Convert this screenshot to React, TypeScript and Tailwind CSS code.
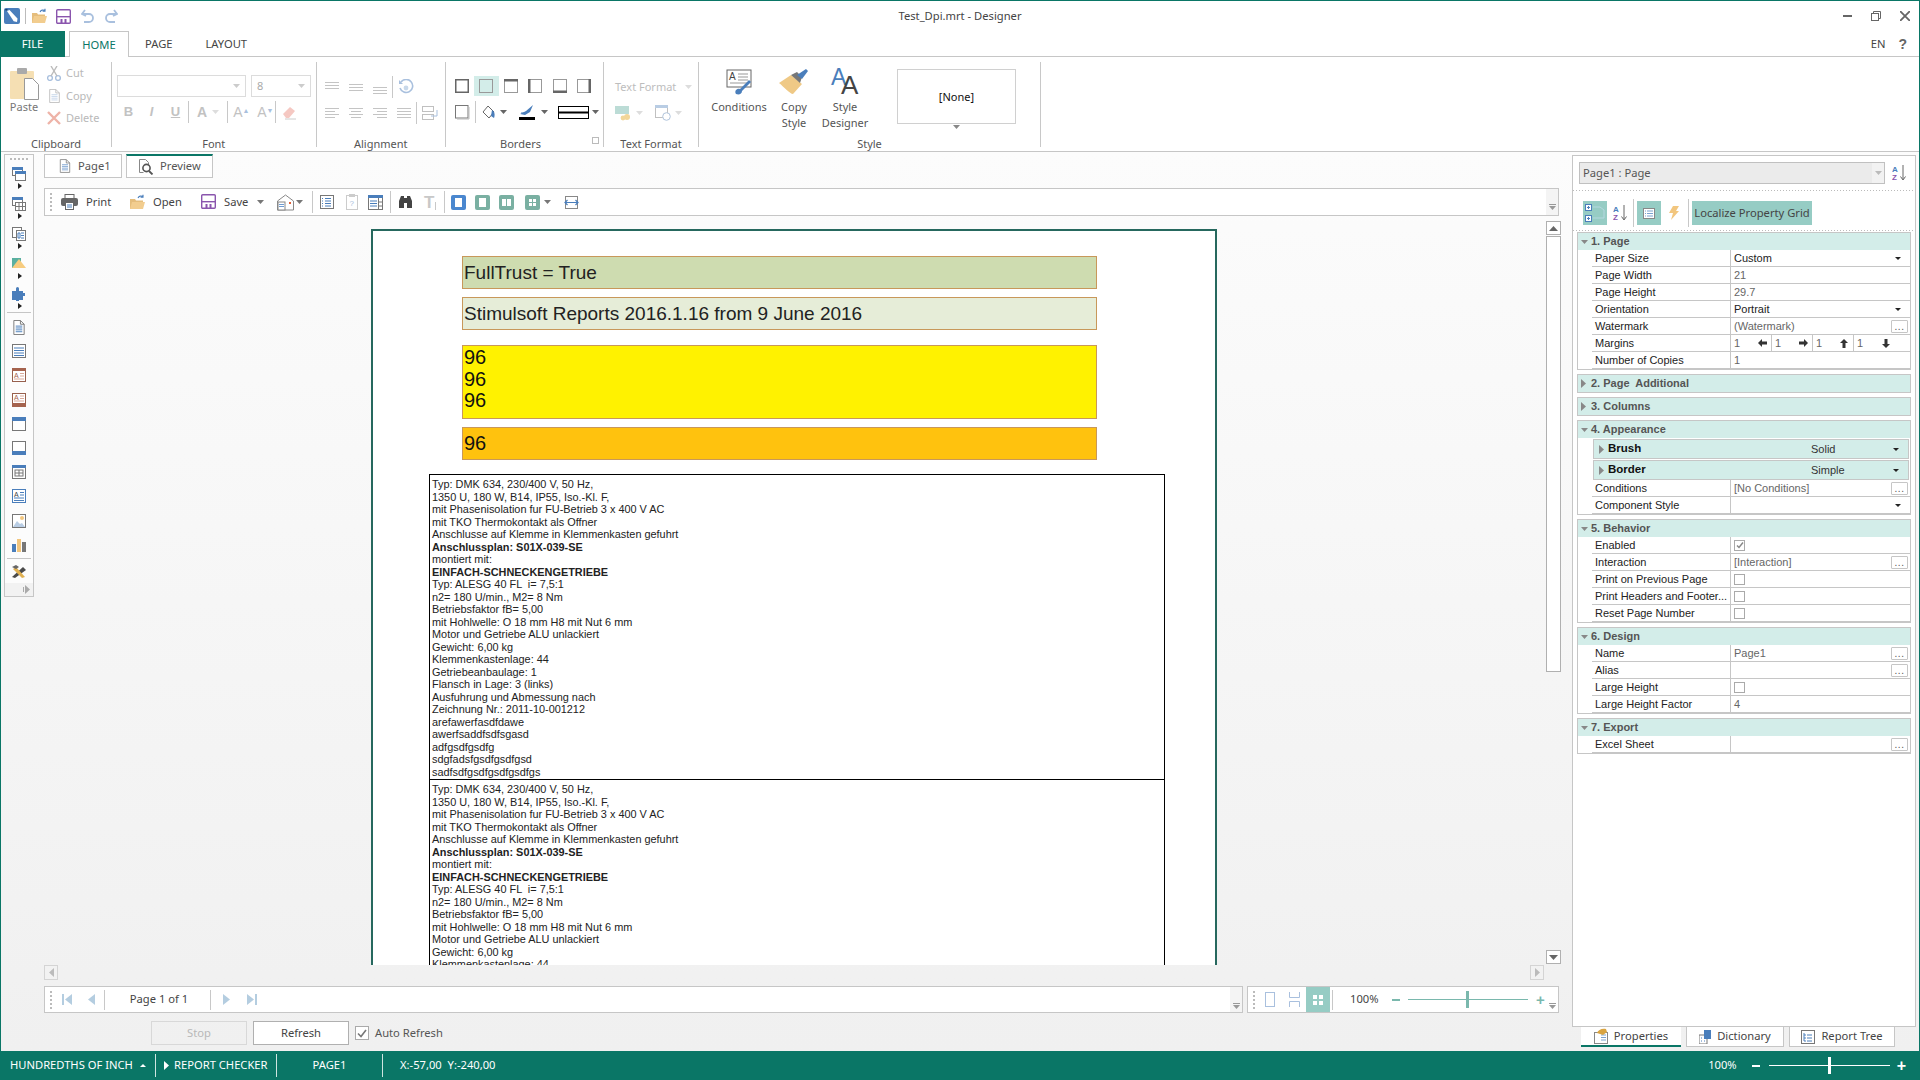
import type { ReactNode } from "react";

const reportLines: Array<[string, boolean?]> = [
  ["Typ: DMK 634, 230/400 V, 50 Hz,"],
  ["1350 U, 180 W, B14, IP55, Iso.-Kl. F,"],
  ["mit Phasenisolation fur FU-Betrieb 3 x 400 V AC"],
  ["mit TKO Thermokontakt als Offner"],
  ["Anschlusse auf Klemme in Klemmenkasten gefuhrt"],
  ["Anschlussplan: S01X-039-SE", true],
  ["montiert mit:"],
  ["EINFACH-SCHNECKENGETRIEBE", true],
  ["Typ: ALESG 40 FL  i= 7,5:1"],
  ["n2= 180 U/min., M2= 8 Nm"],
  ["Betriebsfaktor fB= 5,00"],
  ["mit Hohlwelle: O 18 mm H8 mit Nut 6 mm"],
  ["Motor und Getriebe ALU unlackiert"],
  ["Gewicht: 6,00 kg"],
  ["Klemmenkastenlage: 44"],
  ["Getriebeanbaulage: 1"],
  ["Flansch in Lage: 3 (links)"],
  ["Ausfuhrung und Abmessung nach"],
  ["Zeichnung Nr.: 2011-10-001212"],
  ["arefawerfasdfdawe"],
  ["awerfsaddfsdfsgasd"],
  ["adfgsdfgsdfg"],
  ["sdgfadsfgsdfgsdfgsd"],
  ["sadfsdfgsdfgsdfgsdfgs"],
];

function Svg({ w = 16, h = 16, vb, children }: { w?: number; h?: number; vb?: string; children: ReactNode }) {
  return (
    <svg width={w} height={h} viewBox={vb ?? `0 0 ${w} ${h}`} className="block shrink-0">
      {children}
    </svg>
  );
}

function Caret({ color = "#777" }: { color?: string }) {
  return (
    <Svg w={7} h={4}>
      <path d="M0 0h7L3.5 4z" fill={color} />
    </Svg>
  );
}

function RightCaret({ color = "#888" }: { color?: string }) {
  return (
    <Svg w={5} h={9}>
      <path d="M0 0l5 4.5L0 9z" fill={color} />
    </Svg>
  );
}

function DownCaret({ color = "#888" }: { color?: string }) {
  return (
    <Svg w={9} h={5}>
      <path d="M0 0h9L4.5 5z" fill={color} />
    </Svg>
  );
}

function VSep({ h = 22, color = "bg-[#c8c8c8]", m = "mx-[6px]" }: { h?: number; color?: string; m?: string }) {
  return <div className={`w-px shrink-0 ${color} ${m}`} style={{ height: h }} />;
}

function Folder() {
  return (
    <Svg w={17} h={17}>
      <path d="M1 5h5l1 1.5h7V15H1z" fill="#e5bd7c" />
      <path d="M3 8h13l-2 7H1z" fill="#f2cd8f" />
      <path d="M9 4c1-2 3-2.5 5-1.5M14 .8v2.4h-2.4" stroke="#4a7ebb" strokeWidth="1.1" fill="none" />
    </Svg>
  );
}

function Floppy({ s = 15 }: { s?: number }) {
  return (
    <Svg w={s} h={s} vb="0 0 15 15">
      <rect x="0.7" y="0.7" width="13.6" height="13.6" rx="1" fill="#fff" stroke="#8a55ad" strokeWidth="1.4" />
      <rect x="1" y="7" width="13" height="1.4" fill="#8a55ad" />
      <rect x="4.5" y="10" width="2" height="4" fill="#8a55ad" />
      <rect x="8.5" y="10" width="2" height="4" fill="#8a55ad" />
    </Svg>
  );
}

function Logo() {
  return (
    <Svg w={16} h={16}>
      <rect width="16" height="16" rx="2" fill="#4a7ebb" />
      <path d="M3 3l2.5-1 8 8.5-.5 3.5-3.3-.8z" fill="#fff" />
      <path d="M1 1l3 0-2 2z" fill="#1f3f66" />
    </Svg>
  );
}

function Undo({ flip }: { flip?: boolean }) {
  return (
    <Svg w={14} h={15}>
      <path
        d={flip ? "M10 1l3 4-4 2M12.5 5H6a4 4 0 000 8h5" : "M4 1L1 5l4 2M1.5 5H8a4 4 0 010 8H3"}
        fill="none"
        stroke="#a9c0de"
        strokeWidth="1.8"
      />
    </Svg>
  );
}

function DocLines({ w = 14, h = 16, color = "#777", line = "#6f9bd0" }: { w?: number; h?: number; color?: string; line?: string }) {
  return (
    <Svg w={w} h={h} vb="0 0 14 16">
      <path d="M1.5.5h7l4 4v11h-11z" fill="#fff" stroke={color} />
      <path d="M8.5.5v4h4" fill="none" stroke={color} />
      <path d="M3.5 6.5h7M3.5 8.5h7M3.5 10.5h7M3.5 12.5h7" stroke={line} />
    </Svg>
  );
}

function BandIcon({ top, bottom }: { top?: string; bottom?: string }) {
  return (
    <Svg w={14} h={14}>
      <rect x="0.5" y="0.5" width="13" height="13" fill="#fff" stroke="#777" />
      {top && <rect width="14" height="4" fill={top} />}
      {bottom && <rect y="10" width="14" height="4" fill={bottom} />}
    </Svg>
  );
}

function ListIcon({ color = "#4a7ebb" }: { color?: string }) {
  return (
    <Svg w={14} h={14}>
      <rect x="0.5" y="0.5" width="13" height="13" fill="#fff" stroke="#777" />
      <path d="M2 4h10M2 6.5h10M2 9h10M2 11.5h10" stroke={color} />
    </Svg>
  );
}

function BorderBox({ side }: { side?: "all" | "top" | "left" | "bottom" | "right" | "none" }) {
  const dark = "#666";
  const light = "#999";
  return (
    <Svg w={14} h={14}>
      <rect x="0.5" y="0.5" width="13" height="13" fill="none" stroke={side === "all" ? dark : light} strokeWidth={side === "all" ? 2 : 1} />
      {side === "top" && <rect width="14" height="2.5" fill={dark} />}
      {side === "left" && <rect width="2.5" height="14" fill={dark} />}
      {side === "bottom" && <rect y="11.5" width="14" height="2.5" fill={dark} />}
      {side === "right" && <rect x="11.5" width="2.5" height="14" fill={dark} />}
    </Svg>
  );
}

function TextAlign({ kind }: { kind: "top" | "mid" | "bot" | "left" | "center" | "right" | "just" }) {
  const y = kind === "top" ? [1, 4, 7] : kind === "mid" ? [3, 6, 9] : kind === "bot" ? [6, 9, 12] : [1, 4, 7, 10];
  return (
    <Svg w={14} h={13}>
      {y.map((v, i) => {
        let x1 = 0;
        let x2 = 14;
        if (i % 2 === 1 && kind === "left") x2 = 10;
        if (i % 2 === 1 && kind === "right") x1 = 4;
        if (i % 2 === 1 && kind === "center") {
          x1 = 2;
          x2 = 12;
        }
        return <rect key={v} x={x1} y={v} width={x2 - x1} height="1" fill="#c4c4c4" />;
      })}
    </Svg>
  );
}

function Group({ w, label, labelPad, children, extra }: { w: string; label?: string; labelPad?: string; children?: ReactNode; extra?: ReactNode }) {
  return (
    <div className={`${w} relative flex h-[85px] shrink-0 flex-col border-r border-[#c8c8c8]`}>
      <div className="h-[74px] shrink-0">{children}</div>
      <div className={`h-[16px] shrink-0 text-center text-[11px] leading-[16px] text-[#555] ${labelPad ?? ""}`}>{label}</div>
      {extra}
    </div>
  );
}

function DisabledSmall({ icon, text }: { icon: ReactNode; text: string }) {
  return (
    <div className="flex h-[22.5px] items-center gap-[5px]">
      <div className="flex w-[14px] justify-center">{icon}</div>
      <span className="text-[11px] text-[#b9b9b9]">{text}</span>
    </div>
  );
}

function Ribbon() {
  return (
    <div className="flex h-[95px] shrink-0 border-b border-[#c6c6c6] bg-white pt-[5px]">
      <Group w="w-[111px]" label="Clipboard">
        <div className="flex">
          <div className="flex w-[46px] flex-col items-center pt-[6px]">
            <Svg w={29} h={33}>
              <rect x="0" y="3" width="24" height="28" rx="1" fill="#f5dfb3" />
              <rect x="7" y="0" width="10" height="6" rx="1" fill="#aaa" />
              <path d="M14.5 10.5h8l6 6v15h-14z" fill="#fff" stroke="#999" />
            </Svg>
            <span className="mt-[-2px] text-[11px] text-[#777]">Paste</span>
          </div>
          <div>
            <DisabledSmall
              text="Cut"
              icon={
                <Svg w={14} h={15}>
                  <circle cx="3" cy="12" r="2.4" fill="none" stroke="#a9c0de" strokeWidth="1.4" />
                  <circle cx="11" cy="12" r="2.4" fill="none" stroke="#a9c0de" strokeWidth="1.4" />
                  <path d="M4 10L10 0M10 10L4 0" stroke="#bbb" strokeWidth="1.4" />
                </Svg>
              }
            />
            <DisabledSmall text="Copy" icon={<DocLines w={13} h={14} color="#bbb" line="#c4d4e8" />} />
            <DisabledSmall
              text="Delete"
              icon={
                <Svg w={14} h={14}>
                  <path d="M1 1l12 12M13 1L1 13" stroke="#eeb3a8" strokeWidth="2.4" />
                </Svg>
              }
            />
          </div>
        </div>
      </Group>
      <Group w="w-[204.5px]" label="Font">
        <div className="pl-[5px] pt-[13px]">
          <div className="flex gap-[5px]">
            <div className="flex h-[22px] w-[129px] items-center justify-end border border-[#dcdcdc] pr-[5px]">
              <Caret color="#ccc" />
            </div>
            <div className="flex h-[22px] w-[60px] items-center justify-between border border-[#dcdcdc] px-[5px] text-[11px] text-[#aaa]">
              8
              <Caret color="#ccc" />
            </div>
          </div>
          <div className="mt-[4px] flex h-[22px] items-center font-['Liberation_Sans',sans-serif] text-[#c2c2c2]">
            <span className="w-[23px] text-center text-[13px] font-bold">B</span>
            <span className="w-[23px] text-center text-[13px] font-bold italic">I</span>
            <span className="w-[25px] text-center text-[13px] font-bold underline">U</span>
            <VSep m="mx-0" />
            <span className="ml-[8px] text-[14px] font-bold">A</span>
            <div className="ml-[5px]">
              <Caret color="#ddd" />
            </div>
            <VSep m="ml-[8px] mr-[5px]" />
            <span className="w-[24px] text-[14px]">
              A<sup className="text-[7px] text-[#a9c0de]">▲</sup>
            </span>
            <span className="w-[18px] text-[14px]">
              A<sup className="text-[7px] text-[#a9c0de]">▼</sup>
            </span>
            <VSep m="mx-0" />
            <div className="ml-[6px]">
              <Svg w={15} h={15}>
                <path d="M1 9l7-7 5 4-6 7H4z" fill="#f5c8c2" />
                <path d="M3 14h11" stroke="#ccc" />
              </Svg>
            </div>
          </div>
        </div>
      </Group>
      <Group w="w-[129.5px]" label="Alignment">
        <div className="pl-[8px] pt-[15px]">
          <div className="flex h-[20px] items-center gap-[10px]">
            <TextAlign kind="top" />
            <TextAlign kind="mid" />
            <TextAlign kind="bot" />
            <VSep m="-mx-[5px]" />
            <Svg w={18} h={16}>
              <path d="M3 3a6.5 6.5 0 11-1 6" fill="none" stroke="#a9c0de" strokeWidth="1.6" />
              <path d="M1 1v4h4" fill="#a9c0de" />
              <circle cx="8" cy="9" r="2.4" fill="#c8d8ea" />
            </Svg>
          </div>
          <div className="mt-[6px] flex h-[20px] items-center gap-[10px]">
            <TextAlign kind="left" />
            <TextAlign kind="center" />
            <TextAlign kind="right" />
            <TextAlign kind="just" />
            <VSep m="-mx-[5px]" />
            <Svg w={16} h={15}>
              <rect x="0.5" y="0.5" width="11" height="5" fill="none" stroke="#c0c0c0" />
              <rect x="0.5" y="8.5" width="11" height="5" fill="none" stroke="#c0c0c0" />
              <path d="M15 4v6H9" stroke="#a9c0de" fill="none" />
            </Svg>
          </div>
        </div>
      </Group>
      <Group
        w="w-[158px]"
        label="Borders"
        labelPad="pr-[8px]"
        extra={<div className="absolute bottom-[3px] right-[4px] h-[7px] w-[7px] border border-[#bbb] bg-white" />}
      >
        <div className="pl-[3.5px] pt-[14px]">
          <div className="flex h-[20px] items-center">
            <div className="flex w-[24.5px] justify-center">
              <BorderBox side="all" />
            </div>
            <div className="flex h-[20px] w-[24.5px] items-center justify-center bg-[#d3ede9]">
              <BorderBox side="none" />
            </div>
            <div className="flex w-[24.5px] justify-center">
              <BorderBox side="top" />
            </div>
            <div className="flex w-[24.5px] justify-center">
              <BorderBox side="left" />
            </div>
            <div className="flex w-[24.5px] justify-center">
              <BorderBox side="bottom" />
            </div>
            <div className="flex w-[24.5px] justify-center">
              <BorderBox side="right" />
            </div>
          </div>
          <div className="mt-[6px] flex h-[20px] items-center pl-[5px]">
            <Svg w={15} h={15}>
              <rect x="0.5" y="0.5" width="12.5" height="12.5" fill="#fff" stroke="#777" />
              <path d="M14 2v12H2" stroke="#bbb" fill="none" />
            </Svg>
            <VSep m="mx-[5px]" />
            <Svg w={15} h={15}>
              <path d="M7 1l6 6-5 6-6-6z" fill="#fff" stroke="#666" />
              <path d="M11 5c3 2 3 5 2 8l-3-2z" fill="#4a7ebb" />
            </Svg>
            <div className="ml-[4px]">
              <Caret color="#666" />
            </div>
            <div className="ml-[12px]">
              <Svg w={17} h={16}>
                <path d="M1 10l6-3 7-6-3 7-5 3z" fill="#4a7ebb" />
                <path d="M2 9h6" stroke="#4a7ebb" />
                <rect x="0" y="13" width="16" height="3" fill="#000" />
              </Svg>
            </div>
            <div className="ml-[5px]">
              <Caret color="#666" />
            </div>
            <div className="ml-[10px]">
              <Svg w={31} h={13}>
                <rect x="0.5" y="0.5" width="30" height="12" fill="#fff" stroke="#000" />
                <rect x="0" y="5.5" width="31" height="2" fill="#000" />
              </Svg>
            </div>
            <div className="ml-[3px]">
              <Caret color="#666" />
            </div>
          </div>
        </div>
      </Group>
      <Group w="w-[95px]" label="Text Format">
        <div className="pl-[11px] pt-[15px]">
          <div className="flex h-[20px] items-center gap-[9px] text-[11px] text-[#bdbdbd]">
            Text Format
            <Caret color="#ddd" />
          </div>
          <div className="mt-[6px] flex h-[20px] items-center">
            <Svg w={17} h={16}>
              <rect x="0" y="1" width="14" height="8" fill="#bcdcd6" />
              <circle cx="12" cy="12" r="3" fill="#f2d699" />
              <circle cx="8" cy="13" r="2.4" fill="#f2d699" />
            </Svg>
            <div className="ml-[4px]">
              <Caret color="#ddd" />
            </div>
            <div className="ml-[12px]">
              <Svg w={16} h={16}>
                <rect x="0.5" y="0.5" width="12" height="12" fill="#fff" stroke="#c0c0c0" />
                <rect width="13" height="3" fill="#b9cde4" />
                <circle cx="11.5" cy="11.5" r="3.8" fill="#fff" stroke="#b0c4dc" />
              </Svg>
            </div>
            <div className="ml-[4px]">
              <Caret color="#ddd" />
            </div>
          </div>
        </div>
      </Group>
      <Group w="w-[342px]" label="Style">
        <div className="flex pt-[7px] text-center text-[11px] leading-[16px] text-[#555]">
          <div className="flex w-[80px] flex-col items-center">
            <Svg w={26} h={26}>
              <rect x="1" y="1" width="24" height="17" fill="#fff" stroke="#666" />
              <path d="M12 5h10M12 8h10M12 11h10M4 14h18" stroke="#999" />
              <text x="3" y="11" fontSize="10" fontFamily="Liberation Sans" fill="#444">
                A
              </text>
              <path d="M10 25c-2-3 1-6 4-5l9-9 2 2-9 9c0 3-3 4-6 3z" fill="#4a7ebb" />
            </Svg>
            <div className="mt-[4px]">Conditions</div>
          </div>
          <div className="flex w-[30px] flex-col items-center">
            <Svg w={30} h={26}>
              <path d="M0 14l12-8 11 9-9 10c-3 0-9-7-14-11z" fill="#efc986" />
              <path d="M12 6l6-3 5 5-2 6z" fill="#777" />
              <path d="M18 6l9-6 2 2-6 8z" fill="#4a7ebb" />
            </Svg>
            <div className="mt-[4px]">
              Copy
              <br />
              Style
            </div>
          </div>
          <div className="ml-[6px] flex w-[60px] flex-col items-center">
            <div className="relative h-[26px] w-[28px] font-['Liberation_Sans',sans-serif] leading-none">
              <span className="absolute left-0 top-[-3px] text-[23px] text-[#4a7ebb]">A</span>
              <span className="absolute left-[10px] top-[3px] text-[26px] text-[#444]">A</span>
            </div>
            <div className="mt-[4px]">
              Style
              <br />
              Designer
            </div>
          </div>
          <div className="ml-[22px]">
            <div className="flex h-[55px] w-[119px] items-center justify-center border border-[#d0d0d0] text-[11px] text-[#111]">
              [None]
            </div>
            <div className="mt-[1px] flex justify-center">
              <Caret color="#888" />
            </div>
          </div>
        </div>
      </Group>
    </div>
  );
}

function LeftToolbar() {
  const stacked = (a: ReactNode) => (
    <div className="flex h-[30px] flex-col items-center pt-[3px]">
      {a}
      <div className="ml-px mt-[2px]">
        <Svg w={4} h={6}>
          <path d="M0 0l4 3-4 3z" fill="#222" />
        </Svg>
      </div>
    </div>
  );
  const single = (a: ReactNode) => <div className="flex h-[24.2px] items-center justify-center">{a}</div>;
  return (
    <div className="ml-[3px] mt-[2px] flex h-[443px] w-[30px] shrink-0 flex-col border border-[#c6c6c6] bg-[#fcfcfc]">
      <div className="mt-[3px] flex justify-center">
        <div className="h-[2px] w-[18px] bg-[repeating-linear-gradient(90deg,#bbb_0,#bbb_2px,transparent_2px,transparent_4px)]" />
      </div>
      <div className="mt-[4px] flex flex-col">
        {stacked(
          <Svg w={14} h={14}>
            <rect x="0.5" y="0.5" width="10" height="8" fill="#fff" stroke="#777" />
            <rect width="11" height="3" fill="#4a7ebb" />
            <rect x="3.5" y="4.5" width="10" height="9" fill="#fff" stroke="#777" />
            <rect x="3" y="4" width="11" height="3" fill="#4a7ebb" />
          </Svg>
        )}
        {stacked(
          <Svg w={14} h={14}>
            <rect x="0.5" y="0.5" width="10" height="8" fill="#fff" stroke="#777" />
            <rect width="11" height="3" fill="#4a7ebb" />
            <rect x="3.5" y="5.5" width="10" height="8" fill="#fff" stroke="#777" />
            <path d="M3.5 9.5h10M7 5.5v8M10.5 5.5v8" stroke="#777" />
          </Svg>
        )}
        {stacked(
          <Svg w={14} h={14}>
            <rect x="0.5" y="0.5" width="9" height="10" fill="#fff" stroke="#777" />
            <rect x="4.5" y="3.5" width="9" height="10" fill="#fff" stroke="#777" />
            <path d="M6 6h2v5H6zM9 6h3M9 8.5h3M9 11h3" stroke="#4a7ebb" fill="none" />
          </Svg>
        )}
        {stacked(
          <Svg w={14} h={14}>
            <rect y="1" width="9" height="10" fill="#5ab0a0" />
            <path d="M0 11l7-9 7 9z" fill="#f7cc7f" />
          </Svg>
        )}
        {stacked(
          <Svg w={14} h={14}>
            <path d="M0 4h4V1.5a1.5 1.5 0 013 0V4h4v2h2v3h-2v4H7v1H4v-1H0z" fill="#4a7ebb" />
          </Svg>
        )}
      </div>
      <div className="mx-[2px] mt-[-2px] h-px bg-[#c6c6c6]" />
      <div className="mt-[2px] flex flex-col">
        {single(<DocLines w={14} h={15} color="#777" line="#4a7ebb" />)}
        {single(<ListIcon />)}
        {single(
          <Svg w={14} h={14}>
            <rect x="0.5" y="0.5" width="13" height="13" fill="#fff" stroke="#97604d" />
            <rect width="14" height="3" fill="#a5634e" />
            <path d="M8 5.5h4M8 8h4M2 11h10" stroke="#d9a999" />
            <text x="2" y="10" fontSize="7" fontFamily="Liberation Sans" fill="#a5634e">
              A
            </text>
          </Svg>
        )}
        {single(
          <Svg w={14} h={14}>
            <rect x="0.5" y="0.5" width="13" height="13" fill="#fff" stroke="#97604d" />
            <rect y="10" width="14" height="4" fill="#a5634e" />
            <path d="M8 3h4M8 5.5h4M2 8h10" stroke="#d9a999" />
            <text x="2" y="7" fontSize="7" fontFamily="Liberation Sans" fill="#a5634e">
              A
            </text>
          </Svg>
        )}
        {single(<BandIcon top="#4a7ebb" />)}
        {single(<BandIcon bottom="#4a7ebb" />)}
        {single(
          <Svg w={14} h={14}>
            <rect x="0.5" y="0.5" width="13" height="13" fill="#fff" stroke="#777" />
            <rect width="14" height="3" fill="#4a7ebb" />
            <rect x="3" y="5" width="8" height="6" fill="none" stroke="#777" />
            <path d="M3 8h8M7 5v6" stroke="#777" />
          </Svg>
        )}
        {single(
          <Svg w={14} h={14}>
            <rect x="0.5" y="0.5" width="13" height="13" fill="#fff" stroke="#4a7ebb" />
            <path d="M8 3.5h4M8 6h4M2 9h10M2 11.5h10" stroke="#4a7ebb" />
            <text x="2" y="7.5" fontSize="7" fontFamily="Liberation Sans" fill="#444">
              A
            </text>
          </Svg>
        )}
        {single(
          <Svg w={14} h={14}>
            <rect x="0.5" y="0.5" width="13" height="13" fill="#fff" stroke="#777" />
            <path d="M1 13l4-6 3 3 2-1 3 4z" fill="#b9cde4" />
            <circle cx="10" cy="4" r="2" fill="#f2c67e" />
          </Svg>
        )}
        {single(
          <Svg w={14} h={14}>
            <rect y="6" width="4" height="8" fill="#4a7ebb" />
            <rect x="5" y="1" width="4" height="13" fill="#f2c67e" />
            <rect x="10" y="4" width="4" height="10" fill="#777" />
          </Svg>
        )}
      </div>
      <div className="mx-[2px] mt-[1px] h-px bg-[#c6c6c6]" />
      <div className="flex h-[24px] items-center justify-center">
        <Svg w={16} h={14}>
          <path d="M1 13L12 3l3 3L4 14z" fill="#4a4a4a" />
          <path d="M14 13L5 3 2 5l9 9z" fill="#e0b050" />
          <path d="M1 3l4-2 3 2-3 2z" fill="#666" />
        </Svg>
      </div>
      <div className="flex flex-1 items-center justify-end gap-px bg-[#f2f2f2] pr-[3px]">
        <div className="h-[5px] w-px bg-[#aaa]" />
        <RightCaret color="#aaa" />
      </div>
    </div>
  );
}

function ListIconBlue() {
  return (
    <Svg w={14} h={14}>
      <rect x="0.5" y="0.5" width="13" height="13" fill="#fff" stroke="#777" />
      <path d="M5 3.5h6M5 6h6M5 8.5h6M5 11h6" stroke="#4a7ebb" />
      <path d="M2.5 3v1M2.5 5.5v1M2.5 8v1M2.5 10.5v1" stroke="#4a7ebb" />
    </Svg>
  );
}

function FilledPage({ bg, kind }: { bg: string; kind?: "one" | "two" | "four" }) {
  return (
    <div className={`${bg} flex h-[15px] w-[15px] items-center justify-center rounded-[2px]`}>
      <Svg w={9} h={9}>
        {kind === "four" ? (
          <path d="M1 1h3v3H1zM5 1h3v3H5zM1 5h3v3H1zM5 5h3v3H5z" fill="#fff" />
        ) : kind === "two" ? (
          <path d="M0 1h4v7H0zM5 1h4v7H5z" fill="#fff" />
        ) : (
          <path d="M1 0h7v9H1z" fill="#fff" />
        )}
      </Svg>
    </div>
  );
}

function Grip() {
  return (
    <div className="ml-[5px] h-[18px] w-[2px] shrink-0 bg-[repeating-linear-gradient(180deg,#bbb_0,#bbb_2px,transparent_2px,transparent_4px)]" />
  );
}

function PreviewToolbar() {
  return (
    <div className="flex h-[28px] w-[1515px] shrink-0 items-center border border-[#c6c6c6] bg-white text-[11.2px] text-[#444]">
      <Grip />
      <div className="ml-[9px] flex w-[50px] items-center gap-[8px]">
        <Svg w={17} h={16}>
          <rect x="4" y="0.5" width="9" height="5" fill="#fff" stroke="#666" />
          <rect y="4" width="17" height="8" rx="2" fill="#666" />
          <rect x="4.5" y="8.5" width="8" height="7" fill="#fff" stroke="#666" />
          <path d="M6 11h5M6 13h5" stroke="#4a7ebb" />
        </Svg>
        Print
      </div>
      <div className="ml-[18px] flex w-[53px] items-center gap-[7px]">
        <Folder />
        Open
      </div>
      <div className="ml-[19px] flex w-[48px] items-center gap-[8px]">
        <Floppy />
        Save
      </div>
      <div className="ml-[8px]">
        <Caret />
      </div>
      <div className="ml-[13px]">
        <Svg w={17} h={17}>
          <path d="M0.5 7L8.5 1l8 6v9H.5z" fill="#fff" stroke="#888" />
          <rect x="1" y="8" width="7" height="8" fill="#fff" stroke="#888" />
          <path d="M2 10.5h5M2 12.5h5" stroke="#6f9bd0" />
          <rect x="12" y="8" width="2" height="2" fill="#e0603a" />
        </Svg>
      </div>
      <div className="ml-[2px]">
        <Caret />
      </div>
      <VSep m="ml-[9px] mr-[7px]" />
      <ListIconBlue />
      <div className="ml-[12px]">
        <Svg w={12} h={16}>
          <rect x="0.5" y="1.5" width="11" height="14" fill="#fff" stroke="#ccc" />
          <rect x="3" y="0" width="6" height="3" fill="#ccc" />
          <text x="3.5" y="12" fontSize="8" fontFamily="Liberation Sans" fill="#a9c0de">
            ?
          </text>
        </Svg>
      </div>
      <div className="ml-[10px]">
        <Svg w={15} h={15}>
          <rect x="0.5" y="0.5" width="14" height="14" fill="#fff" stroke="#777" />
          <rect width="15" height="3" fill="#4a7ebb" />
          <path d="M2 6h7M2 8.5h7M2 11h7" stroke="#4a7ebb" />
          <path d="M10.5 3v12M10.5 7h4M10.5 11h4" stroke="#777" />
        </Svg>
      </div>
      <VSep m="ml-[7px] mr-[7px]" />
      <Svg w={15} h={14}>
        <path d="M1 13V6l2-5h3v12zM9 13V1h3l2 5v7z" fill="#444" />
        <rect x="5" y="3" width="5" height="5" fill="#444" />
      </Svg>
      <div className="ml-[11px] w-[10px] font-['Liberation_Sans',sans-serif] text-[17px] font-bold leading-none text-[#c8c8c8]">T</div>
      <div className="ml-[1px] mt-[8px] h-[8px] w-px bg-[#c8c8c8]" />
      <VSep m="ml-[8px] mr-[6px]" />
      <FilledPage bg="bg-[#4a87cf]" />
      <div className="ml-[9px]">
        <FilledPage bg="bg-[#7ab0a2]" kind="one" />
      </div>
      <div className="ml-[9px]">
        <FilledPage bg="bg-[#7ab0a2]" kind="two" />
      </div>
      <div className="ml-[11px]">
        <FilledPage bg="bg-[#7ab0a2]" kind="four" />
      </div>
      <div className="ml-[4px]">
        <Caret />
      </div>
      <div className="ml-[13px]">
        <Svg w={15} h={15}>
          <rect x="1.5" y="1.5" width="12" height="12" fill="#fff" stroke="#888" />
          <path d="M1 7.5h13M3.5 5L1 7.5 3.5 10M11.5 5L14 7.5 11.5 10" stroke="#4a7ebb" strokeWidth="1.2" fill="none" />
        </Svg>
      </div>
      <div className="ml-auto flex h-full w-[12px] flex-col items-center justify-end bg-[#f4f4f4] pb-[5px]">
        <div className="mb-px h-px w-[7px] bg-[#999]" />
        <Caret color="#999" />
      </div>
    </div>
  );
}

function ReportBlock({ lines }: { lines: Array<[string, boolean?]> }) {
  return (
    <div className="h-[304px] shrink-0 px-[2px] pt-[3px] text-[10.9px] leading-[12.5px] text-[#222]">
      {lines.map(([line, bold], i) => (
        <div key={i} className={`whitespace-pre ${bold ? "font-bold" : ""}`}>
          {line}
        </div>
      ))}
    </div>
  );
}

function ReportPage() {
  return (
    <div className="h-[760px] w-[846px] shrink-0 border-2 border-[#26685e] bg-white font-['Liberation_Sans',sans-serif]">
      <div className="ml-[89px] mt-[25px] w-[635px] text-[19px] leading-[23px] text-[#222]">
        <div className="flex h-[33px] items-center border border-[#c8985a] bg-[#cedcb0] pl-[1px]">FullTrust = True</div>
        <div className="mt-[8px] flex h-[33px] items-center border border-[#c8985a] bg-[#e6edd8] pl-[1px]">
          Stimulsoft Reports 2016.1.16 from 9 June 2016
        </div>
        <div className="mt-[15px] flex h-[74px] flex-col border border-[#c8985a] bg-[#fff200] pl-[1px] pt-[1px] text-[20px] leading-[21.5px] text-[#111]">
          <div>96</div>
          <div>96</div>
          <div>96</div>
        </div>
        <div className="mt-[8px] flex h-[33px] items-center border border-[#c8985a] bg-[#ffc20e] pl-[1px] text-[20px] text-[#111]">96</div>
      </div>
      <div className="ml-[56px] mt-[14px] flex h-[700px] w-[736px] flex-col border border-black">
        <ReportBlock lines={reportLines} />
        <div className="h-px shrink-0 bg-black" />
        <ReportBlock lines={reportLines.slice(0, 15)} />
      </div>
    </div>
  );
}

function SmallScrollBtn({ dir }: { dir: "left" | "right" }) {
  return (
    <div className="flex h-[15px] w-[14px] items-center justify-center border border-[#d4d4d4] bg-[#f2f2f2]">
      <svg width="5" height="9" viewBox="0 0 5 9" className="block">
        <path d={dir === "left" ? "M5 0L0 4.5 5 9z" : "M0 0l5 4.5L0 9z"} fill="#bbb" />
      </svg>
    </div>
  );
}

function PageToolbar() {
  const navColor = "#b4cde0";
  return (
    <div className="mt-[6px] flex h-[27px] shrink-0 gap-[4px]">
      <div className="flex h-full w-[1199px] items-center border border-[#c6c6c6] bg-white text-[11.2px] text-[#444]">
        <Grip />
        <div className="ml-[10px]">
          <Svg w={10} h={11}>
            <path d="M0 0h2v11H0zM10 0v11L3 5.5z" fill={navColor} />
          </Svg>
        </div>
        <div className="ml-[16px]">
          <Svg w={7} h={11}>
            <path d="M7 0v11L0 5.5z" fill={navColor} />
          </Svg>
        </div>
        <VSep m="ml-[9px] mr-0" h={20} />
        <div className="w-[105px] pl-[3px] text-center">Page 1 of 1</div>
        <VSep m="m-0" h={20} />
        <div className="ml-[12px]">
          <Svg w={7} h={11}>
            <path d="M0 0v11l7-5.5z" fill={navColor} />
          </Svg>
        </div>
        <div className="ml-[17px]">
          <Svg w={10} h={11}>
            <path d="M0 0v11l7-5.5zM8 0h2v11H8z" fill={navColor} />
          </Svg>
        </div>
        <div className="ml-auto flex h-full w-[12px] flex-col items-center justify-end bg-[#f4f4f4] pb-[3px]">
          <div className="mb-px h-px w-[7px] bg-[#999]" />
          <Caret color="#999" />
        </div>
      </div>
      <div className="flex h-full w-[312px] items-center border border-[#c6c6c6] bg-white text-[11.2px] text-[#444]">
        <Grip />
        <div className="ml-[10px]">
          <Svg w={10} h={15}>
            <rect x="0.5" y="0.5" width="9" height="14" fill="none" stroke="#a9c0de" />
          </Svg>
        </div>
        <div className="ml-[14px]">
          <Svg w={11} h={15}>
            <path d="M.5 0v5.5h10V0M.5 15V9.5h10V15" fill="none" stroke="#a9c0de" />
          </Svg>
        </div>
        <div className="ml-[6px] flex h-[25px] w-[24px] items-center justify-center bg-[#96ccc4]">
          <Svg w={10} h={10}>
            <path d="M0 0h4v4H0zM6 0h4v4H6zM0 6h4v4H0zM6 6h4v4H6z" fill="#fff" />
          </Svg>
        </div>
        <VSep m="ml-[2px] mr-[17px]" h={20} />
        <span className="w-[28px]">100%</span>
        <div className="ml-[14px] h-[2px] w-[8px] bg-[#7ab8ad]" />
        <div className="relative ml-[8px] h-px w-[120px] bg-[#7ab8ad]">
          <div className="absolute left-[58px] top-[-8px] h-[17px] w-[3px] bg-[#7ab8ad]" />
        </div>
        <div className="ml-[8px] font-['Liberation_Sans',sans-serif] text-[15px] font-bold leading-none text-[#7ab8ad]">+</div>
        <div className="ml-auto flex h-full w-[12px] flex-col items-center justify-end pb-[3px]">
          <div className="mb-px h-px w-[7px] bg-[#999]" />
          <Caret color="#999" />
        </div>
      </div>
    </div>
  );
}

function CenterPane() {
  return (
    <div className="flex w-[1528px] shrink-0 flex-col pl-[10px]">
      <div className="mt-[2px] flex h-[24px] shrink-0 gap-[4px] text-[11.2px] text-[#555]">
        <div className="flex w-[78px] items-center gap-[7px] border border-[#c6c6c6] bg-white pl-[14px]">
          <DocLines w={12} h={14} color="#888" line="#7aa2d0" />
          Page1
        </div>
        <div className="flex w-[87px] items-center gap-[6px] border border-[#c6c6c6] border-t-2 border-t-[#0a7666] bg-white pl-[12px]">
          <Svg w={15} h={16}>
            <path d="M.5.5h6l3 3v2M.5.5v13h4" fill="#fff" stroke="#888" />
            <circle cx="7.5" cy="9" r="3.6" fill="#fff" stroke="#555" strokeWidth="1.6" />
            <path d="M10 12l3.5 3.5" stroke="#555" strokeWidth="1.8" />
          </Svg>
          Preview
        </div>
      </div>
      <div className="mt-[10px]">
        <PreviewToolbar />
      </div>
      <div className="flex h-[749px] shrink-0">
        <div className="h-full w-[1502px] overflow-hidden pl-[327px] pt-[13px]">
          <ReportPage />
        </div>
        <div className="flex w-[15px] flex-col pt-[5px] pb-[1px]">
          <div className="flex h-[14px] items-center justify-center border border-[#b0b0b0] bg-white">
            <Svg w={9} h={5}>
              <path d="M4.5 0L9 5H0z" fill="#666" />
            </Svg>
          </div>
          <div className="mt-px h-[436px] border border-[#b0b0b0] bg-white" />
          <div className="mt-auto flex h-[14px] items-center justify-center border border-[#b0b0b0] bg-white">
            <DownCaret color="#666" />
          </div>
        </div>
      </div>
      <div className="flex h-[15px] w-[1500px] shrink-0 justify-between">
        <SmallScrollBtn dir="left" />
        <SmallScrollBtn dir="right" />
      </div>
      <PageToolbar />
      <div className="mt-[8px] flex h-[24px] shrink-0 items-center pl-[107px] text-[11.2px]">
        <div className="flex h-[24px] w-[96px] items-center justify-center border border-[#d8d8d8] text-[#b8b8b8]">Stop</div>
        <div className="ml-[6px] flex h-[24px] w-[96px] items-center justify-center border border-[#b0b0b0] bg-white text-[#444]">Refresh</div>
        <div className="ml-[6px] flex h-[14px] w-[14px] items-center justify-center border border-[#aaa] bg-white">
          <Svg w={10} h={9}>
            <path d="M1 4.5l3 3 5-6.5" stroke="#777" strokeWidth="1.6" fill="none" />
          </Svg>
        </div>
        <span className="ml-[6px] text-[#555]">Auto Refresh</span>
      </div>
    </div>
  );
}

function SectionHeader({ title, open }: { title: string; open?: boolean }) {
  return (
    <div className="flex h-[17px] items-center whitespace-pre bg-[#d3ede9] pl-[3px] font-bold text-[#555]">
      <div className="flex w-[10px] items-center">{open ? <Caret color="#888" /> : <RightCaret color="#888" />}</div>
      {title}
    </div>
  );
}

function Row({ label, children }: { label: string; children?: ReactNode }) {
  return (
    <div className="ml-[14px] flex h-[17px] border-b border-[#c6c6c6]">
      <div className="w-[139px] shrink-0 overflow-hidden whitespace-nowrap border-r border-[#c6c6c6] pl-[3px] leading-[16px] text-[#222]">{label}</div>
      <div className="flex min-w-0 flex-1 items-center pl-[3px]">{children}</div>
    </div>
  );
}

function Val({ dark, text, drop, dots }: { dark?: boolean; text?: string; drop?: boolean; dots?: boolean }) {
  return (
    <>
      <span className={dark ? "text-[#222]" : "text-[#666]"}>{text}</span>
      {drop && (
        <div className="ml-auto mr-[9px]">
          <Svg w={6} h={3}>
            <path d="M0 0h6L3 3z" fill="#222" />
          </Svg>
        </div>
      )}
      {dots && (
        <div className="ml-auto mr-[2px] flex h-[13px] w-[17px] items-center justify-center rounded-[1px] border border-[#c6c6c6] bg-white text-[10px] leading-[9px] tracking-[0.5px] text-[#555]">
          ...
        </div>
      )}
    </>
  );
}

function Check({ on }: { on?: boolean }) {
  return (
    <div className="flex h-[11px] w-[11px] items-center justify-center border border-[#aaa] bg-white">
      {on && (
        <Svg w={8} h={7}>
          <path d="M1 3.5l2 2 4-5" stroke="#888" strokeWidth="1.5" fill="none" />
        </Svg>
      )}
    </div>
  );
}

function ArrowMini({ d }: { d: "l" | "r" | "u" | "d" }) {
  const p = {
    l: "M0 4l4-4v2.5h5v3H4V8z",
    r: "M9 4L5 0v2.5H0v3h5V8z",
    u: "M4 0l4 4H5.5v5h-3V4H0z",
    d: "M4 9l4-4H5.5V0h-3v5H0z",
  }[d];
  return (
    <Svg w={9} h={9}>
      <path d={p} fill="#333" />
    </Svg>
  );
}

function MarginCell({ d, last }: { d: "l" | "r" | "u" | "d"; last?: boolean }) {
  return (
    <div className={`flex h-full w-[41px] items-center justify-between pl-[3px] pr-[4px] text-[#666] ${last ? "" : "border-r border-[#c6c6c6]"}`}>
      1
      <ArrowMini d={d} />
    </div>
  );
}

function SubBar({ label, value }: { label: string; value: string }) {
  return (
    <div className="ml-[15px] mr-px mt-px flex h-[20px] items-center border border-[#c6c6c6] bg-[#d3ede9] pl-[5px]">
      <div className="w-[9px]">
        <RightCaret color="#888" />
      </div>
      <span className="w-[203px] text-[11.5px] font-bold text-[#111]">{label}</span>
      <span className="text-[#333]">{value}</span>
      <div className="ml-auto mr-[9px]">
        <Svg w={6} h={3}>
          <path d="M0 0h6L3 3z" fill="#222" />
        </Svg>
      </div>
    </div>
  );
}

function Section({ title, open, children }: { title: string; open?: boolean; children?: ReactNode }) {
  return (
    <div className="border border-[#c6c6c6]">
      <SectionHeader title={title} open={open} />
      {children}
    </div>
  );
}

function PropertyGrid() {
  return (
    <div className="mt-[1px] flex flex-col gap-[4px] pl-[4px] pr-[4px] font-['Liberation_Sans',sans-serif] text-[11px] text-[#222]">
      <Section title="1. Page" open>
        <Row label="Paper Size"><Val dark text="Custom" drop /></Row>
        <Row label="Page Width"><Val text="21" /></Row>
        <Row label="Page Height"><Val text="29.7" /></Row>
        <Row label="Orientation"><Val dark text="Portrait" drop /></Row>
        <Row label="Watermark"><Val text="(Watermark)" dots /></Row>
        <div className="ml-[14px] flex h-[17px] border-b border-[#c6c6c6]">
          <div className="w-[139px] shrink-0 border-r border-[#c6c6c6] pl-[3px] leading-[16px]">Margins</div>
          <MarginCell d="l" />
          <MarginCell d="r" />
          <MarginCell d="u" />
          <MarginCell d="d" last />
        </div>
        <Row label="Number of Copies"><Val text="1" /></Row>
      </Section>
      <Section title="2. Page  Additional" />
      <Section title="3. Columns" />
      <Section title="4. Appearance" open>
        <SubBar label="Brush" value="Solid" />
        <SubBar label="Border" value="Simple" />
        <Row label="Conditions"><Val text="[No Conditions]" dots /></Row>
        <Row label="Component Style"><Val drop /></Row>
      </Section>
      <Section title="5. Behavior" open>
        <Row label="Enabled"><Check on /></Row>
        <Row label="Interaction"><Val text="[Interaction]" dots /></Row>
        <Row label="Print on Previous Page"><Check /></Row>
        <Row label="Print Headers and Footer..."><Check /></Row>
        <Row label="Reset Page Number"><Check /></Row>
      </Section>
      <Section title="6. Design" open>
        <Row label="Name"><Val text="Page1" dots /></Row>
        <Row label="Alias"><Val dots /></Row>
        <Row label="Large Height"><Check /></Row>
        <Row label="Large Height Factor"><Val text="4" /></Row>
      </Section>
      <Section title="7. Export" open>
        <Row label="Excel Sheet"><Val dots /></Row>
      </Section>
    </div>
  );
}

function AzIcon() {
  return (
    <Svg w={15} h={16}>
      <text x="0" y="7" fontSize="8" fontWeight="bold" fontFamily="Liberation Sans" fill="#4a7ebb">A</text>
      <text x="0" y="15" fontSize="8" fontWeight="bold" fontFamily="Liberation Sans" fill="#8a55ad">Z</text>
      <path d="M11 0v14M8.5 11.5L11 15l2.5-3.5" stroke="#666" fill="none" />
    </Svg>
  );
}

const dottedLine =
  "h-px shrink-0 bg-[repeating-linear-gradient(90deg,#bbb_0,#bbb_1px,transparent_1px,transparent_3px)]";

function RightPanel() {
  return (
    <div className="ml-[10px] flex w-[344px] shrink-0 flex-col pt-[3px]">
      <div className="h-[871px] shrink-0 border border-b-0 border-[#c6c6c6] bg-white">
        <div className="flex items-center pl-[6px] pt-[6px]">
          <div className="flex h-[22px] w-[306px] items-center justify-between border border-[#c0c0c0] bg-[#ebebeb] pl-[3px] text-[11.2px] text-[#555]">
            Page1 : Page
            <div className="flex h-full w-[12px] items-center justify-center bg-[#f2f2f2]">
              <Caret color="#bbb" />
            </div>
          </div>
          <div className="ml-[7px]">
            <AzIcon />
          </div>
        </div>
        <div className={`mt-[6px] ${dottedLine}`} />
        <div className="mt-[10px] flex h-[24px] items-center pl-[10px]">
          <div className="flex h-[24px] w-[24px] items-center justify-center bg-[#96ccc4]">
            <Svg w={20} h={19}>
              <rect x="0.5" y="0.5" width="6" height="6" fill="#fff" stroke="#4a7ebb" />
              <rect x="0.5" y="11.5" width="6" height="6" fill="#fff" stroke="#4a7ebb" />
              <path d="M2 3.5h3M3.5 2v3M2 14.5h3M3.5 13v3" stroke="#4a7ebb" />
              <path d="M8 3h7l4 3v8h-11" stroke="#b4d8e0" fill="none" />
            </Svg>
          </div>
          <div className="ml-[6px]">
            <AzIcon />
          </div>
          <VSep m="ml-[5px] mr-[3px]" h={28} />
          <div className="flex h-[24px] w-[24px] items-center justify-center bg-[#96ccc4]">
            <Svg w={12} h={11}>
              <rect x="0.5" y="0.5" width="11" height="10" fill="#fff" stroke="#888" />
              <path d="M4 3h6M4 5.5h6M4 8h6M2 3h1M2 5.5h1M2 8h1" stroke="#7aa2d0" />
            </Svg>
          </div>
          <div className="ml-[8px]">
            <Svg w={10} h={14}>
              <path d="M4 0h6L7 5h3L2 14l2-7H0z" fill="#f2c67e" />
            </Svg>
          </div>
          <VSep m="ml-[9px] mr-[3px]" h={28} />
          <div className="flex h-[24px] w-[120px] items-center justify-center whitespace-nowrap bg-[#96ccc4] text-[11.2px] text-[#444]">
            Localize Property Grid
          </div>
        </div>
        <div className={`mt-[5px] ${dottedLine}`} />
        <PropertyGrid />
      </div>
      <div className="flex h-[20px] shrink-0 gap-[5px] border-t border-[#c6c6c6] pl-[9px] pt-px text-[11.2px] text-[#444]">
        <div className="-mt-px flex h-[20px] w-[100px] items-center justify-center gap-[5px] border-b-2 border-[#0a7666] bg-white">
          <Svg w={15} h={16}>
            <rect x="0.5" y="4.5" width="13" height="11" fill="#fff" stroke="#888" />
            <path d="M7 7h5M7 9.5h5M7 12h5" stroke="#7aa2d0" />
            <path d="M3 5c1-3 5-5 9-4l1 3-4 3z" fill="#d9a441" />
          </Svg>
          Properties
        </div>
        <div className="-mt-px flex h-[20px] w-[98px] items-center justify-center gap-[6px] border border-t-0 border-[#c6c6c6] bg-white">
          <Svg w={12} h={14}>
            <rect x="0" y="5" width="8" height="9" fill="#fff" stroke="#777" />
            <rect x="5" y="0" width="7" height="9" fill="#4a7ebb" />
            <path d="M2 8h1M5 8h1M2 11h1M5 11h1" stroke="#4a7ebb" />
          </Svg>
          Dictionary
        </div>
        <div className="-mt-px flex h-[20px] w-[106px] items-center justify-center gap-[6px] border border-t-0 border-[#c6c6c6] bg-white">
          <Svg w={14} h={14}>
            <rect x="0.5" y="0.5" width="13" height="13" fill="#fff" stroke="#777" />
            <path d="M3 3v8M3 5h2M3 8h2M3 11h2M6 5h5M6 8h5M6 11h5" stroke="#4a7ebb" />
          </Svg>
          Report Tree
        </div>
      </div>
    </div>
  );
}

function StatusBar() {
  const sep = <div className="h-[23px] w-px shrink-0 bg-[#cfe5e1]" />;
  return (
    <div className="flex h-[29px] shrink-0 items-center bg-[#0a7666] text-[11.2px] text-white">
      <span className="ml-[9px] w-[126px] whitespace-nowrap">HUNDREDTHS OF INCH</span>
      <div className="ml-[4px]">
        <Svg w={6} h={3}>
          <path d="M3 0l3 3H0z" fill="#fff" />
        </Svg>
      </div>
      <div className="ml-[9px]">{sep}</div>
      <div className="ml-[8px]">
        <RightCaret color="#fff" />
      </div>
      <span className="ml-[5px] w-[95px] whitespace-nowrap">REPORT CHECKER</span>
      <div className="ml-[7px]">{sep}</div>
      <span className="w-[105px] text-center">PAGE1</span>
      {sep}
      <span className="ml-[17px] whitespace-nowrap">X:-57,00&nbsp; Y:-240,00</span>
      <span className="ml-auto">100%</span>
      <div className="ml-[15px] h-[2px] w-[8px] bg-white" />
      <div className="relative ml-[9px] h-px w-[121px] bg-white">
        <div className="absolute left-[59px] top-[-8px] h-[17px] w-[3px] bg-white" />
      </div>
      <div className="ml-[7px] mr-[13px] font-['Liberation_Sans',sans-serif] text-[16px] font-bold leading-none">+</div>
    </div>
  );
}

export default function App() {
  return (
    <div className="flex h-[1080px] w-[1920px] flex-col overflow-hidden border-x border-t border-[#0a7666] bg-white font-['Noto_Sans',sans-serif]">
      <div className="flex h-[30px] shrink-0 items-center">
        <div className="flex flex-1 items-center pl-[3px]">
          <Logo />
          <div className="mx-[5px] h-[16px] w-px bg-[#bbb]" />
          <Folder />
          <div className="ml-[8px]">
            <Floppy />
          </div>
          <div className="ml-[10px]">
            <Undo />
          </div>
          <div className="ml-[9px]">
            <Undo flip />
          </div>
        </div>
        <div className="pl-[6px] pt-[1px] text-[11.2px] text-[#444]">Test_Dpi.mrt - Designer</div>
        <div className="flex flex-1 items-center justify-end gap-[19px] pr-[9px]">
          <div className="h-[2px] w-[9px] bg-[#666]" />
          <Svg w={10} h={10}>
            <rect x="0.5" y="2.5" width="7" height="7" fill="#fff" stroke="#666" />
            <path d="M2.5 2.5v-2h7v7h-2" fill="none" stroke="#666" />
          </Svg>
          <Svg w={10} h={10}>
            <path d="M0 0l10 10M10 0L0 10" stroke="#666" strokeWidth="1.8" />
          </Svg>
        </div>
      </div>
      <div className="flex h-[26px] shrink-0 border-b border-[#c6c6c6] text-[11.2px] text-[#444]">
        <div className="-ml-px flex h-[26px] w-[65px] items-center justify-center bg-[#0a7666] pt-px text-white">FILE</div>
        <div className="ml-[4px] flex h-[26px] w-[60px] items-center justify-center border border-b-0 border-[#c6c6c6] bg-white pt-px text-[#0a7666]">HOME</div>
        <div className="ml-[16px] flex items-center pt-px">PAGE</div>
        <div className="ml-[33px] flex items-center pt-px">LAYOUT</div>
        <div className="ml-auto flex items-center gap-[13px] pr-[12px] pt-px">
          <span>EN</span>
          <span className="font-['Liberation_Sans',sans-serif] text-[14px] font-bold text-[#666]">?</span>
        </div>
      </div>
      <Ribbon />
      <div className="flex h-[899px] shrink-0 bg-[linear-gradient(#fcfcfc,#f0f0f0)]">
        <LeftToolbar />
        <CenterPane />
        <RightPanel />
      </div>
      <StatusBar />
    </div>
  );
}
